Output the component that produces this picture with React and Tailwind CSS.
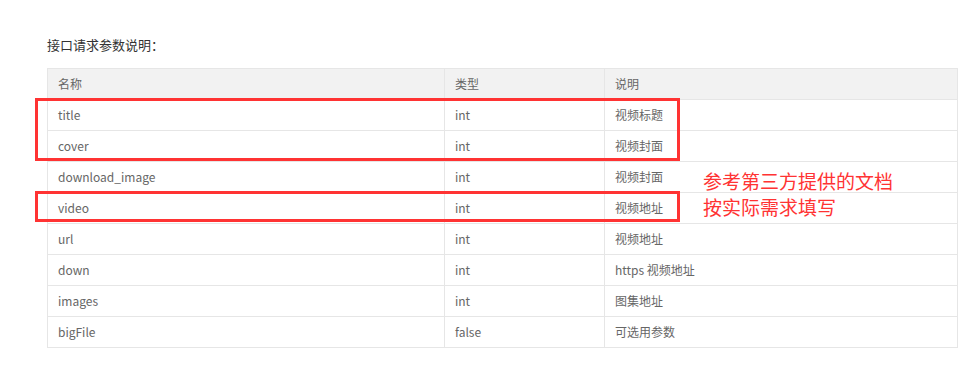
import React from 'react';

const rows = [
  ['title', 'int', '视频标题'],
  ['cover', 'int', '视频封面'],
  ['download_image', 'int', '视频封面'],
  ['video', 'int', '视频地址'],
  ['url', 'int', '视频地址'],
  ['down', 'int', 'https 视频地址'],
  ['images', 'int', '图集地址'],
  ['bigFile', 'false', '可选用参数'],
];

const font = { fontFamily: '"Noto Sans CJK SC", "Noto Sans", sans-serif' };

export default function App() {
  return (
    <div className="relative w-[976px] h-[384px] bg-white" style={font}>
      <div className="pl-[47px] pt-[36px]">
        <p className="text-[13px] leading-[18px] text-[#333]">接口请求参数说明：</p>
        <table className="mt-[14px] w-[911px] border-collapse border border-[#e6e6e6] text-[12px] text-[#666] table-fixed">
          <colgroup>
            <col className="w-[397px]" />
            <col className="w-[160px]" />
            <col />
          </colgroup>
          <thead>
            <tr className="bg-[#f2f2f2] h-[31px]">
              <th className="border border-[#e6e6e6] px-[10px] text-left font-normal">名称</th>
              <th className="border border-[#e6e6e6] px-[10px] text-left font-normal">类型</th>
              <th className="border border-[#e6e6e6] px-[10px] text-left font-normal">说明</th>
            </tr>
          </thead>
          <tbody>
            {rows.map(([name, type, desc]) => (
              <tr key={name} className="h-[31px]">
                <td className="border border-[#e6e6e6] px-[10px]">{name}</td>
                <td className="border border-[#e6e6e6] px-[10px]">{type}</td>
                <td className="border border-[#e6e6e6] px-[10px]">{desc}</td>
              </tr>
            ))}
          </tbody>
        </table>
      </div>

      {/* red annotation boxes */}
      <div className="absolute left-[35px] top-[98px] w-[645px] h-[63px] border-[3px] border-[#f33]" />
      <div className="absolute left-[35px] top-[191px] w-[645px] h-[31px] border-[3px] border-[#f33]" />

      <div className="absolute left-[703px] top-[168px] text-[19px] leading-[26px] text-[#f33]">
        <p>参考第三方提供的文档</p>
        <p>按实际需求填写</p>
      </div>
    </div>
  );
}
